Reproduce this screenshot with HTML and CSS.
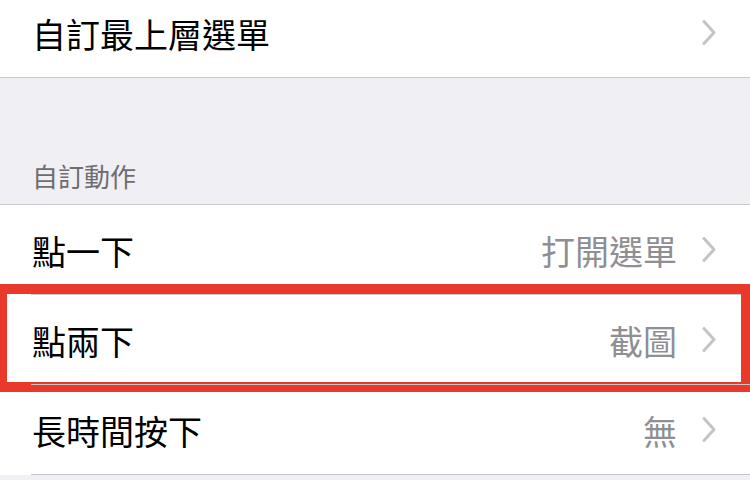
FILE: index.html
```html
<!DOCTYPE html>
<html lang="zh-Hant">
<head>
    <meta charset="UTF-8">
    <meta name="viewport" content="width=device-width, initial-scale=1.0">
    <title>自訂動作</title>
    <link rel="stylesheet" href="styles.css">
</head>
<body>
    <div class="group group-top">
        <div class="row">
            <span class="label">自訂最上層選單</span>
            <svg class="chevron" viewBox="0 0 14 25"><polyline points="2,1.5 12,12.5 2,23.5"/></svg>
        </div>
    </div>

    <div class="section-header">自訂動作</div>

    <div class="group">
        <div class="row">
            <span class="label">點一下</span>
            <span class="value">打開選單</span>
            <svg class="chevron" viewBox="0 0 14 25"><polyline points="2,1.5 12,12.5 2,23.5"/></svg>
        </div>
        <div class="row highlighted">
            <span class="label">點兩下</span>
            <span class="value">截圖</span>
            <svg class="chevron" viewBox="0 0 14 25"><polyline points="2,1.5 12,12.5 2,23.5"/></svg>
        </div>
        <div class="row">
            <span class="label">長時間按下</span>
            <span class="value">無</span>
            <svg class="chevron" viewBox="0 0 14 25"><polyline points="2,1.5 12,12.5 2,23.5"/></svg>
        </div>
    </div>
</body>
</html>
```

FILE: styles.css
```css
body {
    margin: 0;
    padding: 0;
    background-color: #f0eff4;
    font-family: "Noto Sans CJK TC", "Noto Sans", sans-serif;
    font-weight: 400;
    color: #000;
    overflow: hidden;
}
.group {
    background-color: #fff;
    border-top: 1px solid #c8c7cc;
}
.group-top {
    border-top: none;
    border-bottom: 1px solid #c8c7cc;
    margin-top: -12px;
}
.row {
    position: relative;
    display: flex;
    align-items: center;
    height: 89px;
    padding: 0 34px 0 32px;
    font-size: 34px;
    line-height: 1;
}
.row + .row {
    border-top: 1px solid #c8c7cc;
    margin-left: 31px;
    padding-left: 1px;
}
.group:not(.group-top) .row:last-child {
    border-bottom: 1px solid #c8c7cc;
}
.label {
    flex: 1;
    padding-top: 3px;
}
.value {
    color: #8e8e93;
    padding-top: 3px;
    margin-right: 25px;
}
.chevron {
    width: 14px;
    height: 25px;
    fill: none;
    stroke: #c4c4c7;
    stroke-width: 3;
    stroke-linecap: round;
    stroke-linejoin: round;
}
.section-header {
    height: 126px;
    box-sizing: border-box;
    display: flex;
    align-items: flex-end;
    padding: 0 0 10px 32px;
    font-size: 26px;
    color: #6d6d72;
}
.highlighted::after {
    content: "";
    position: absolute;
    top: -11px;
    left: -31px;
    right: 0;
    bottom: -8px;
    border-style: solid;
    border-color: #e9392a;
    border-width: 10px 9px 10px 7px;
}
```
